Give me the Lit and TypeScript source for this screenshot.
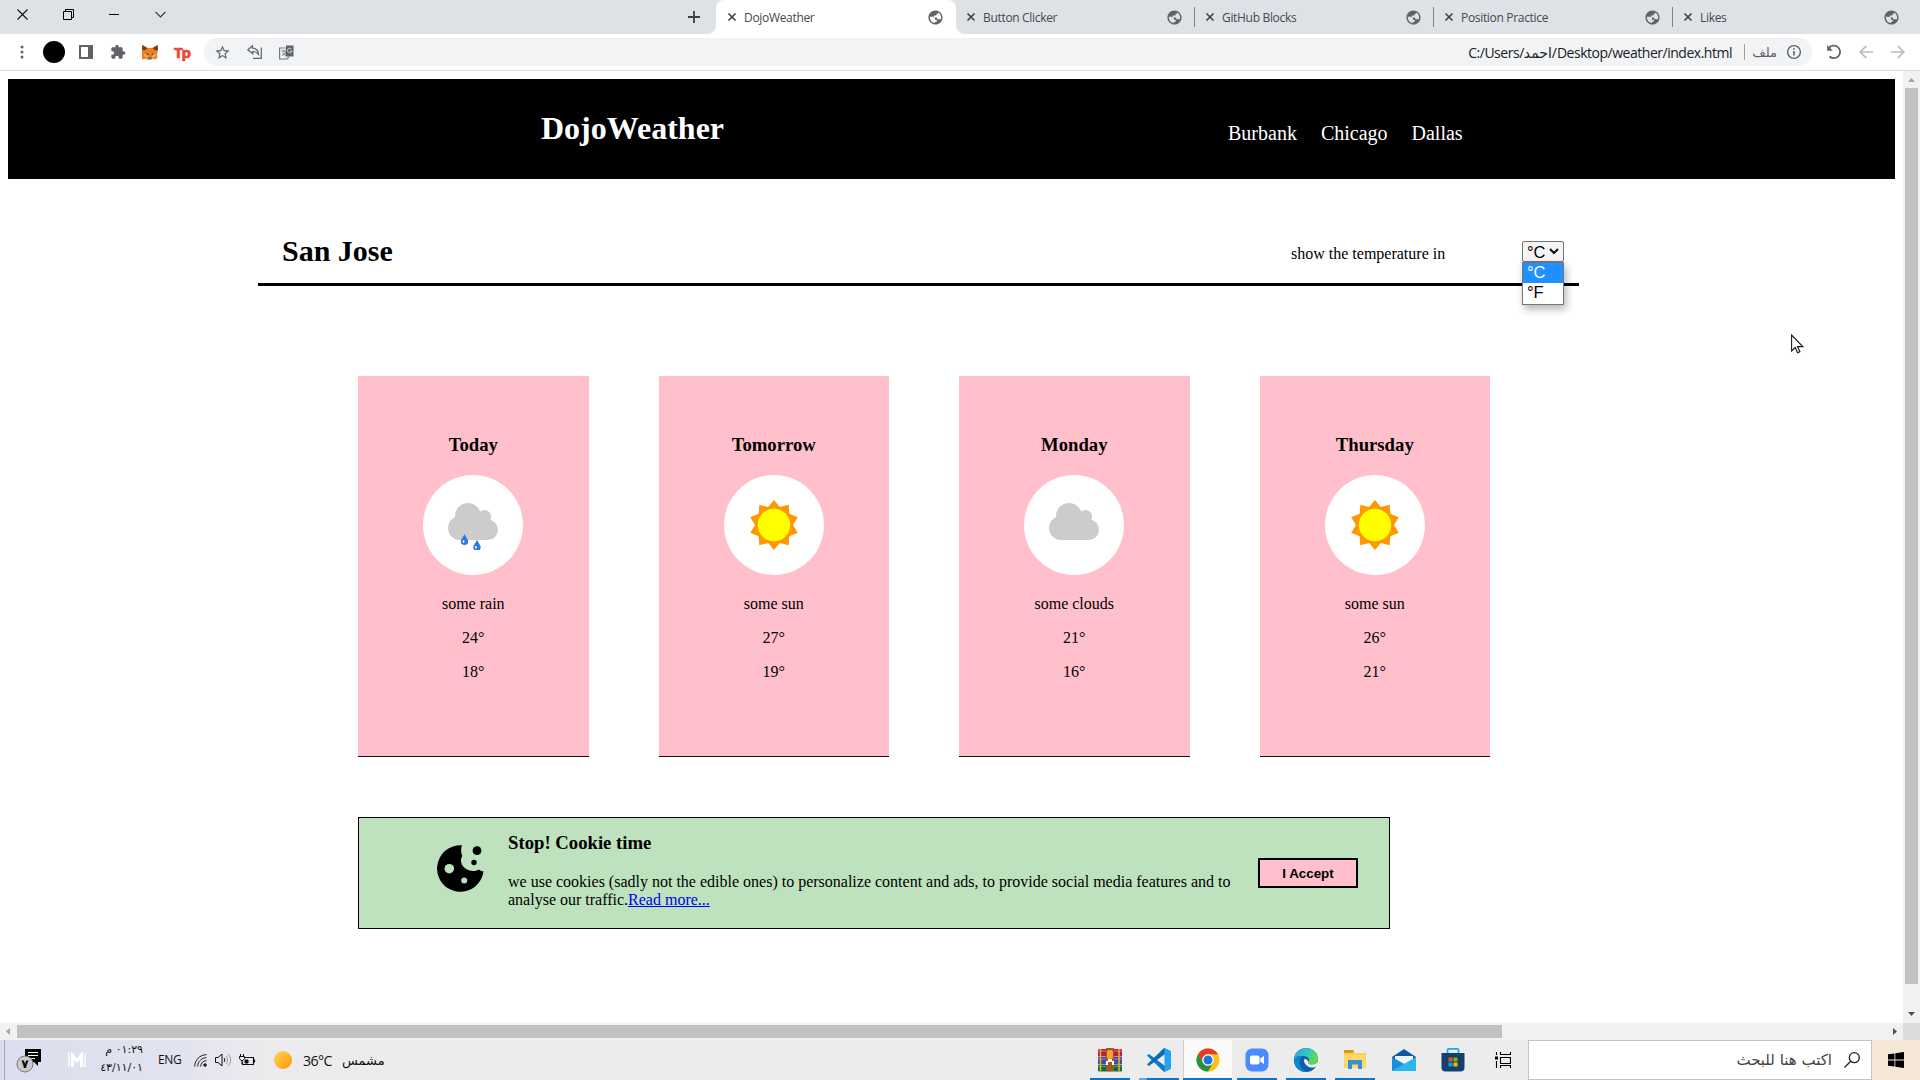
import { LitElement, html, svg, css } from "lit";
import { customElement, property } from "lit/decorators.js";

const GLOBE =
  "M12 2C6.48 2 2 6.48 2 12s4.48 10 10 10 10-4.48 10-10S17.52 2 12 2zm-1.2 17.9c-3.8-.6-6.8-3.8-6.8-7.9 0-.3 0-.6.1-.9H8.500c1.800 0 3 1.200 3 2.700v1.700h2.600v2.200c-1.600 0-3.300.8-3.300 2.200zM14.600 14.300c0-1.700-1-2.300-2.600-2.300H9.600V9.300h2.600c.9 0 1.400-.6 1.400-1.400V6.700h2V4.900c2.600 1.300 4.400 4 4.400 7.100 0 .9-.2 1.700-.4 2.500h-2c-1.200 0-1.700-.2-3-.2z";
const STAR =
  "M22 9.24l-7.19-.62L12 2 9.19 8.63 2 9.24l5.46 4.73L5.82 21 12 17.27 18.18 21l-1.63-7.03L22 9.24zM12 15.4l-3.76 2.27 1-4.28-3.32-2.88 4.38-.38L12 6.1l1.71 4.04 4.38.38-3.32 2.88 1 4.28L12 15.4z";
const PUZZLE =
  "M20.5 11H19V7c0-1.1-.9-2-2-2h-4V3.5C13 2.12 11.88 1 10.5 1S8 2.12 8 3.5V5H4c-1.1 0-1.99.9-1.99 2v3.8H3.5c1.49 0 2.7 1.21 2.7 2.7s-1.21 2.7-2.7 2.7H2V20c0 1.1.9 2 2 2h3.8v-1.5c0-1.49 1.21-2.7 2.7-2.7 1.49 0 2.7 1.21 2.7 2.7V22H17c1.1 0 2-.9 2-2v-4h1.5c1.38 0 2.5-1.12 2.5-2.5S21.88 11 20.5 11z";

const CLOUD = svg`<g fill="#ccc"><circle cx="20" cy="16" r="13"/><circle cx="36.500" cy="16.700" r="6.700"/><circle cx="12" cy="28" r="12"/><circle cx="39.700" cy="29.700" r="10.300"/><rect x="12" y="18" width="28" height="22"/></g>`;
const drop = (x: number, y: number) =>
  svg`<g transform="translate(${x} ${y})"><path d="M0 0C1 3 3.700 5 3.700 7.500a3.700 3.500 0 0 1-7.400 0C-3.700 5-1 3 0 0z" fill="#2a7ae2"/><ellipse cx="-1" cy="7.600" rx=".9" ry="1.300" fill="#fff"/></g>`;
const SUN_POINTS = Array.from({ length: 20 }, (_, i) => {
  const r = i % 2 ? 19 : 25;
  const a = (i * Math.PI) / 10 - Math.PI / 2;
  return `${(25 + r * Math.cos(a)).toFixed(2)},${(25 + r * Math.sin(a)).toFixed(2)}`;
}).join(" ");

const WEATHER: Record<string, unknown> = {
  rain: html`<svg width="50" height="50" viewBox="0 0 50 50">${CLOUD}${drop(16.500, 34)}${drop(29, 39.700)}</svg>`,
  sun: html`<svg width="50" height="50" viewBox="0 0 50 50"><polygon points=${SUN_POINTS} fill="#ff9800"/><circle cx="25" cy="25" r="16.200" fill="#ff0"/></svg>`,
  clouds: html`<svg width="50" height="50" viewBox="0 0 50 50">${CLOUD}</svg>`,
};

@customElement("browser-tab")
class BrowserTab extends LitElement {
  @property() label = "";
  @property({ type: Boolean, reflect: true }) active = false;
  @property({ type: Boolean, reflect: true }) divided = false;
  static styles = css`
    :host { display: flex; flex: none; box-sizing: border-box; width: 239px; height: 34px; align-items: center; padding: 0 12px 0 10px; position: relative; font: 12px "Open Sans", "Noto Sans", sans-serif; color: #45494d; }
    :host([active]) { background: #fff; border-radius: 8px 8px 0 0; width: 240px; padding-left: 11px; }
    :host([active])::before, :host([active])::after { content: ""; position: absolute; bottom: 0; width: 8px; height: 8px; }
    :host([active])::before { left: -8px; background: radial-gradient(circle at 0 0, transparent 7.5px, #fff 8px); }
    :host([active])::after { right: -8px; background: radial-gradient(circle at 100% 0, transparent 7.5px, #fff 8px); }
    :host([divided])::after { content: ""; position: absolute; right: 0; top: 7px; width: 1px; height: 20px; background: #808387; }
    .title { flex: 1; margin-left: 7px; font-size: 12px; letter-spacing: -0.32px; white-space: nowrap; }
    svg { display: block; }
  `;
  render() {
    return html`<svg width="10" height="10" viewBox="0 0 10 10"><path d="M1.500 1.500l7 7M8.500 1.500l-7 7" stroke="#3c4043" stroke-width="1.600"/></svg>
      <span class="title">${this.label}</span>
      <svg width="17" height="17" viewBox="0 0 24 24"><path d=${GLOBE} fill="#5f6368"/></svg>`;
  }
}

@customElement("browser-chrome")
class BrowserChrome extends LitElement {
  static styles = css`
    :host { display: block; height: 71px; font-family: "Open Sans", "Noto Sans", "DejaVu Sans", sans-serif; }
    svg { display: block; }
    .strip { display: flex; height: 34px; background: #dee1e6; }
    .controls { display: flex; margin-left: -1px; }
    .controls span { width: 46px; height: 28px; display: grid; place-items: center; }
    .tabs { display: flex; margin-left: auto; width: 1248px; }
    .plus { width: 44px; height: 34px; flex: none; display: grid; place-items: center; }
    .bar { display: flex; height: 36px; align-items: center; background: #fff; border-bottom: 1px solid #d9dadc; padding: 0 6px; }
    .cell { width: 32px; height: 28px; display: grid; place-items: center; }
    .avatar { width: 22px; height: 22px; border-radius: 50%; background: #000; }
    .tp { font: bold 15px "Open Sans", sans-serif; color: #f04438; letter-spacing: -1px; -webkit-text-stroke: 0.7px #f04438; line-height: 16px; }
    .omni { flex: 1; display: flex; align-items: center; height: 28px; border-radius: 14px; background: #f1f3f4; margin: 0 6px; padding: 0 10px 0 2px; }
    .url { margin-left: auto; font-size: 14px; letter-spacing: -0.48px; color: #202124; white-space: nowrap; }
    .sep { width: 1px; height: 16px; background: #9aa0a6; margin: 0 7px 0 12px; }
    .file { font-size: 13px; color: #5f6368; width: 25px; margin-right: 9px; white-space: nowrap; }
  `;
  render() {
    return html`
      <div class="strip">
        <div class="controls">
          <span><svg width="11" height="11" viewBox="0 0 11 11"><path d="M.5.5l10 10M10.500.5l-10 10" stroke="#111" stroke-width="1.100"/></svg></span>
          <span><svg width="11" height="11" viewBox="0 0 11 11"><path d="M.5 2.500h8v8h-8zM2.500 2.500v-2h8v8h-2" fill="none" stroke="#000"/></svg></span>
          <span><svg width="10" height="11" viewBox="0 0 10 11"><path d="M0 5.500h10" stroke="#000"/></svg></span>
          <span><svg width="11" height="7" viewBox="0 0 11 7"><path d="M.5.8l5 5 5-5" fill="none" stroke="#333" stroke-width="1.200"/></svg></span>
        </div>
        <div class="tabs">
          <span class="plus"><svg width="12" height="12" viewBox="0 0 12 12"><path d="M6 0v12M0 6h12" stroke="#3c4043" stroke-width="1.800"/></svg></span>
          <browser-tab active label="DojoWeather"></browser-tab>
          <browser-tab divided label="Button Clicker"></browser-tab>
          <browser-tab divided label="GitHub Blocks"></browser-tab>
          <browser-tab divided label="Position Practice"></browser-tab>
          <browser-tab label="Likes"></browser-tab>
        </div>
      </div>
      <div class="bar">
        <span class="cell"><svg width="4" height="14" viewBox="0 0 4 14" fill="#5f6368"><circle cx="2" cy="2" r="1.500"/><circle cx="2" cy="7" r="1.500"/><circle cx="2" cy="12" r="1.500"/></svg></span>
        <span class="cell"><i class="avatar"></i></span>
        <span class="cell"><svg width="14" height="14" viewBox="0 0 14 14"><path fill-rule="evenodd" d="M0 0h14v14H0zM2 2v10h7V2z" fill="#5f6368"/></svg></span>
        <span class="cell"><svg width="16" height="16" viewBox="0 0 24 24"><path d=${PUZZLE} fill="#5f6368"/></svg></span>
        <span class="cell"><svg width="16" height="15" viewBox="0 0 32 30"><path d="M1 0l11 6h8l11-6 1 9-2 9 1 7-4 4-7-2-3 3h-6l-3-3-7 2-4-4 1-7-2-9z" fill="#e8821e"/><path d="M1 0l10 7-7 4-4-1zM31 0L21 7l7 4 4-1z" fill="#763d16"/><path d="M3 18h8l2 8-8-2zM29 18h-8l-2 8 8-2z" fill="#f5a04c"/><path d="M9 16l5 3-4 1zM23 16l-5 3 4 1z" fill="#243447"/><path d="M12 25h8l1 3-2 2h-6l-2-2z" fill="#c0ad9e"/><path d="M13 25h6v2h-6z" fill="#161616"/></svg></span>
        <span class="cell"><span class="tp">Tp</span></span>
        <div class="omni">
          <span class="cell"><svg width="17" height="17" viewBox="0 0 24 24"><path d=${STAR} fill="#5f6368"/></svg></span>
          <span class="cell"><svg width="15" height="14" viewBox="0 0 15 14" fill="none" stroke="#5f6368" stroke-width="1.200"><path d="M5.500.8L.8 4.800l5 4V6.500c2.500-.2 4.200.8 5.700 2.800C11.200 5.500 9 3.300 5.500 3.200zM14.300 2.500v10.800H6"/></svg></span>
          <span class="cell"><svg width="15" height="15" viewBox="0 0 15 15"><path d="M6 3H.6v11H8l2-2" fill="none" stroke="#74787c" stroke-width="1.200"/><path d="M7 .5h7.500V11.500H6.500V8z" fill="#5f6368"/><path d="M2.500 6h4M4.500 5v1M3 10.500C5 9.500 6 8 6 6.500M3.500 8l3 2.500" fill="none" stroke="#74787c"/><path d="M12.700 4.200a2.300 2.300 0 1 0 .3 1.800h-2" fill="none" stroke="#d5d7d9"/></svg></span>
          <span class="url">C:/Users/احمد/Desktop/weather/index.html</span>
          <i class="sep"></i>
          <span class="file" dir="rtl">ملف</span>
          <svg width="16" height="16" viewBox="0 0 16 16"><circle cx="8" cy="8" r="6.400" fill="none" stroke="#5f6368" stroke-width="1.400"/><path d="M8 7v4.500M8 4.300v1.500" stroke="#5f6368" stroke-width="1.600"/></svg>
        </div>
        <span class="cell"><svg width="16" height="16" viewBox="0 0 16 16"><path d="M2.600 4.400A6.300 6.300 0 1 1 3.500 12.500" fill="none" stroke="#5f6368" stroke-width="1.800"/><path d="M1.200 1v5.700h5.700z" fill="#5f6368"/></svg></span>
        <span class="cell"><svg width="14" height="14" viewBox="0 0 14 14" fill="none" stroke="#babcbe" stroke-width="1.700"><path d="M14 7H1.500M7.300.8L1.200 7l6.100 6.200"/></svg></span>
        <span class="cell"><svg width="14" height="14" viewBox="0 0 14 14" fill="none" stroke="#babcbe" stroke-width="1.700"><path d="M0 7h12.500M6.700.8L12.800 7l-6.100 6.200"/></svg></span>
      </div>`;
  }
}

@customElement("forecast-card")
class ForecastCard extends LitElement {
  @property() day = "";
  @property() icon = "sun";
  @property() text = "";
  @property() high = "";
  @property() low = "";
  static styles = css`
    :host { display: flex; flex-direction: column; align-items: center; box-sizing: border-box; height: 381px; padding-top: 58px; background: #ffc0cb; border-bottom: 1px solid #111; }
    h3 { margin: 0 0 20px; font-size: 18.72px; line-height: 21px; }
    .disc { width: 100px; height: 100px; border-radius: 50%; background: #fff; display: grid; place-items: center; margin-bottom: 20px; }
    p { margin: 0 0 16px; font-size: 16px; line-height: 18px; }
    svg { display: block; }
  `;
  render() {
    return html`<h3>${this.day}</h3><div class="disc">${WEATHER[this.icon]}</div><p>${this.text}</p><p>${this.high}°</p><p>${this.low}°</p>`;
  }
}

@customElement("weather-page")
class WeatherPage extends LitElement {
  static styles = css`
    :host { display: block; box-sizing: border-box; padding: 8px 8px 0; background: #fff; color: #000; font: 16px/18px "Liberation Serif", "Times New Roman", serif; overflow: hidden; }
    header { display: flex; height: 100px; background: #000; color: #fff; padding-left: 533px; }
    h1 { margin: 31px 0 0; font-size: 32px; line-height: 37px; width: 687px; }
    nav { display: flex; gap: 24px; font-size: 20px; line-height: 23px; padding-top: 43px; }
    .city { display: flex; width: 1297px; margin: 46px 0 0 250px; padding-left: 24px; height: 58px; border-bottom: 3px solid #000; position: relative; }
    h2 { margin: 9px 0 0; font-size: 30px; line-height: 34px; width: 1009px; }
    .city p { margin: 20px 0 0; width: 231px; }
    .select { position: relative; box-sizing: border-box; width: 42px; height: 21px; margin-top: 16px; border: 1px solid #767676; border-radius: 2px; background: #f5f5f5; font: 16.5px/18px "Liberation Sans", Arial, sans-serif; padding: 0 4px; display: flex; align-items: center; justify-content: space-between; }
    .select svg { display: block; }
    .options { position: absolute; left: -1px; top: 20px; width: 40px; height: 41px; border: 1px solid #767676; background: #fff; box-shadow: 2px 4px 8px rgba(0, 0, 0, 0.3); z-index: 1; }
    .options div { height: 20px; padding-left: 4px; line-height: 18px; }
    .options .on { background: #1e90ff; color: #fff; }
    .cards { display: grid; grid-template-columns: repeat(4, 1fr); gap: 70px; width: 1132px; margin: 90px 0 0 350px; }
    .cookie { display: flex; box-sizing: border-box; width: 1032px; height: 112px; margin: 60px 0 0 350px; background: #bee2be; border: 1px solid #000; padding-left: 78px; }
    .cookie > svg { display: block; margin-top: 27px; flex: none; }
    .copy { width: 730px; margin-left: 24px; flex: none; }
    h3 { margin: 14px 0 20px; font-size: 18.72px; line-height: 21px; }
    .copy p { margin: 0; }
    a { color: #0000ee; text-decoration: underline; }
    button { box-sizing: border-box; width: 100px; height: 30px; margin: 40px 0 0 20px; padding: 0; border: 2px solid #000; background: #ffc0cb; color: #000; font: bold 13.33px "Liberation Sans", Arial, sans-serif; }
  `;
  render() {
    return html`
      <header><h1>DojoWeather</h1><nav><span>Burbank</span><span>Chicago</span><span>Dallas</span></nav></header>
      <section class="city">
        <h2>San Jose</h2>
        <p>show the temperature in</p>
        <div class="select"><span>°C</span><svg width="10" height="7" viewBox="0 0 10 7"><path d="M1 1l4 4 4-4" fill="none" stroke="#111" stroke-width="2"/></svg>
          <div class="options"><div class="on">°C</div><div>°F</div></div>
        </div>
      </section>
      <section class="cards">
        <forecast-card day="Today" icon="rain" text="some rain" high="24" low="18"></forecast-card>
        <forecast-card day="Tomorrow" icon="sun" text="some sun" high="27" low="19"></forecast-card>
        <forecast-card day="Monday" icon="clouds" text="some clouds" high="21" low="16"></forecast-card>
        <forecast-card day="Thursday" icon="sun" text="some sun" high="26" low="21"></forecast-card>
      </section>
      <section class="cookie">
        <svg width="47" height="47" viewBox="0 0 47 47"><path d="M25 .3A23.300 23.300 0 1 0 46.500 26.200c-1.500.3-3-.2-4.500-1.700-7 4-18-.5-18-9 0-2 .5-3 1.300-4.500C24 8 23.600 3.500 25 .3z"/><circle cx="40" cy="5.700" r="4.400"/><circle cx="37" cy="17.500" r="2.700"/><circle cx="12.300" cy="23.700" r="4.800" fill="#bee2be"/><circle cx="27.200" cy="35.500" r="3" fill="#bee2be"/></svg>
        <div class="copy"><h3>Stop! Cookie time</h3><p>we use cookies (sadly not the edible ones) to personalize content and ads, to provide social media features and to analyse our traffic.<a>Read more...</a></p></div>
        <button>I Accept</button>
      </section>`;
  }
}

const APPS = [
  { cls: "run", art: html`<svg width="24" height="24" viewBox="0 0 24 24"><rect y="1" width="24" height="7.500" rx="1" fill="#b3213f"/><rect y="9" width="24" height="7" fill="#4a4aa0"/><rect y="16.500" width="24" height="7" rx="1" fill="#0f6b45"/><path d="M0 3h24" stroke="#e46a7c"/><path d="M0 11h24" stroke="#8080c8"/><path d="M0 18.500h24" stroke="#3fa06d"/><path d="M2.500 1v22.500M21 1v22.500" stroke="#e3b52a" stroke-width="1.500"/><rect x="8" y="0" width="8" height="23" fill="#a4561f"/><rect x="9" y="2" width="6" height="9" rx="2" fill="#f1a233"/><path d="M8 13h2v4H8zM14 13h2v4h-2zM10 11h4v3h-4z" fill="#fff"/></svg>` },
  { cls: "run split", art: html`<svg width="24" height="24" viewBox="0 0 24 24"><path d="M0 7.500L2 6l16 12v6l-1.500-.5z" fill="#0f7ac5"/><path d="M0 16.500L2 18 18 6V0l-1.500.5z" fill="#0a6cb5"/><path d="M17.500 0L24 3v18l-6.500 3z" fill="#24a4f0"/></svg>` },
  { cls: "run current", art: html`<svg width="24" height="24" viewBox="0 0 48 48"><circle cx="24" cy="24" r="23" fill="#fbc116"/><path d="M4.080 12.500A23 23 0 0 1 43.920 12.500H24a11.500 11.500 0 0 0-9.960 17.250z" fill="#e33b2e"/><path d="M4.080 12.500A23 23 0 0 0 24 47l9.960-17.250A11.500 11.500 0 0 1 14.040 29.750z" fill="#229342"/><circle cx="24" cy="24" r="11.500" fill="#fff"/><circle cx="24" cy="24" r="9" fill="#1a73e8"/></svg>` },
  { cls: "run", art: html`<svg width="24" height="24" viewBox="0 0 24 24"><rect x=".5" y=".5" width="23" height="23" rx="6.500" fill="#4a8cff"/><rect x="5" y="7.500" width="9.500" height="9" rx="2" fill="#fff"/><path d="M15.300 10.500L19 8v8l-3.700-2.500z" fill="#fff"/></svg>` },
  { cls: "run", art: html`<svg width="24" height="24" viewBox="0 0 24 24"><defs><linearGradient id="eg" x1="0" y1="0" x2="1" y2=".4"><stop offset="0" stop-color="#2aa5e0"/><stop offset=".55" stop-color="#35c1c8"/><stop offset="1" stop-color="#5fdc50"/></linearGradient></defs><circle cx="12" cy="12" r="12" fill="#0d5fa8"/><path d="M0 12C0 5 5 0 12 0c7 0 12 5 12 10.500 0 4-3 6-6 6-3.500 0-4.500-1.200-3.500-2.500 2-3-1-6-5.500-6C4 8 1 10 0 12z" fill="url(#eg)"/><path d="M0 12c1-3.500 5-4.800 8-3.500-2 1.500-3 4.500-2 8 1 4 4 6.500 7 7.500C5.500 24.500 0 19 0 12z" fill="#1283d6"/><path d="M24 13v6l-1.500-.5c-2 1.200-6 1.500-8 .2-3-1.500-5-4.500-4.500-7.200 1.500-1.500 4 .5 4.500 2.500-1 1.500 0 2.500 3.500 2.500 3 0 5.200-1.200 6-3.500z" fill="#ededed"/></svg>` },
  { cls: "run", art: html`<svg width="22" height="20" viewBox="0 0 22 20"><path d="M0 1h9l1.500 2H22v15H0z" fill="#fbcf55"/><path d="M0 0h9.500v3H0z" fill="#d99a0b"/><path d="M0 5h22v13H0z" fill="#ffd868"/><path d="M4 10h14v9h-4v-4.500H8V19H4z" fill="#3c8ed6"/></svg>` },
  { cls: "", art: html`<svg width="24" height="24" viewBox="0 0 24 24"><path d="M0 9L12 1l12 8v5H0z" fill="#0b59a3"/><path d="M3 8h18v8H3z" fill="#f4f4f4"/><path d="M0 9l14 8-14 6z" fill="#1b8ede"/><path d="M24 9v14H0z" fill="#2bb5ef"/></svg>` },
  { cls: "", art: html`<svg width="24" height="24" viewBox="0 0 24 24"><path d="M6.500 6V2.200C6.500 1 7 .8 8 .8h8c1 0 1.500.3 1.500 1.400V6" fill="none" stroke="#28a8ea" stroke-width="1.800"/><path d="M.5 5h23v14.500a4 4 0 0 1-4 4h-15a4 4 0 0 1-4-4z" fill="#173f6e"/><path d="M7.500 9.500h4v4h-4z" fill="#f25022"/><path d="M12.500 9.500h4v4h-4z" fill="#7fba00"/><path d="M7.500 14.500h4v4h-4z" fill="#00a4ef"/><path d="M12.500 14.500h4v4h-4z" fill="#ffb900"/></svg>` },
  { cls: "view", art: html`<svg width="16" height="16" viewBox="0 0 16 16" fill="none" stroke="#000" stroke-width="1.100"><path d="M5.500 5.500h10v6h-10zM5.500 0v2.500h10V0M5.500 16v-2.500h10V16M1.500 0v3M1.500 9v7"/><path d="M0 4.500h3v3H0z" fill="#000" stroke="none"/></svg>` },
];

@customElement("task-bar")
class TaskBar extends LitElement {
  static styles = css`
    :host { display: flex; height: 40px; align-items: stretch; color: #111; font-family: "Open Sans", "Noto Sans", "DejaVu Sans", sans-serif; background: linear-gradient(90deg, #dcdeed 0, #e2e3f0 180px, #ebebee 260px, #ececec 400px, #ececec 1500px, #f5e8d6 1870px); }
    svg { display: block; }
    .tray { display: flex; align-items: center; margin-left: 4px; border-left: 1px solid #a9abb8; }
    .note { margin-left: 11px; }
    .brand { margin-left: 26px; }
    .clock { width: 50px; margin-left: 7px; font: 11px/18px "DejaVu Sans", sans-serif; white-space: nowrap; letter-spacing: -0.7px; padding-bottom: 2px; }
    .date { letter-spacing: -1.2px; }
    .lang { width: 36px; margin-left: 15px; font-size: 12px; letter-spacing: -0.4px; padding-bottom: 2px; }
    .sound { margin-left: 8px; }
    .battery { margin-left: 7px; }
    .orb { width: 18px; height: 18px; border-radius: 50%; margin: 0 11px 0 18px; background: linear-gradient(135deg, #ffd75a, #ff9400); }
    .temp { width: 39px; font-size: 14.2px; letter-spacing: -0.6px; }
    .sky { font: 13px "DejaVu Sans", sans-serif; }
    .apps { display: flex; margin-left: auto; }
    .app { box-sizing: border-box; width: 49px; height: 40px; display: grid; place-items: center; position: relative; }
    .run::after { content: ""; position: absolute; left: 5px; right: 4px; bottom: 0; height: 2px; background: #0078d7; }
    .split::after { background: linear-gradient(90deg, #5fa8e6 8px, #0078d7 8px); }
    .current { background: #fafafa; border-left: 1px solid #d0d0d0; }
    .current::after { left: -1px; right: 0; }
    .view { width: 51px; }
    .search { box-sizing: border-box; width: 344px; border: 1px solid #c4c4c4; background: #fff; display: flex; align-items: center; justify-content: flex-end; gap: 12px; padding-right: 11px; font: 15px "DejaVu Sans", sans-serif; color: #444; }
    .start { width: 48px; display: grid; place-items: center; background: #f5e8d6; }
  `;
  render() {
    return html`
      <div class="tray">
        <svg class="note" width="26" height="26" viewBox="0 0 26 26"><path d="M9 2h16v13h-3v4l-4-4H9z" fill="#000"/><path d="M12 5.500h10M12 8.500h10M12 11.500h7" stroke="#fff"/><circle cx="9" cy="17" r="8" fill="#c9cad0" stroke="#777"/><text x="9" y="21" text-anchor="middle" font-size="12" font-weight="bold" font-family="DejaVu Sans">٧</text></svg>
        <svg class="brand" width="18" height="16" viewBox="0 0 18 16" fill="none" stroke="#fff"><path d="M1 1v14M17 1v14" stroke-width="1.400"/><path d="M4.500 15V3L9 9l4.500-6v12" stroke-width="3"/></svg>
        <div class="clock" dir="rtl"><div>٠١:٢٩ م</div><div class="date">٤٣/١١/٠١</div></div>
        <span class="lang">ENG</span>
        <svg width="13" height="13" viewBox="0 0 13 13" fill="none" stroke="#222"><path d="M.7 12.500C.7 6 6 .7 12.500.7M3.700 12.500c0-5 4-8.800 8.800-8.800M6.700 12.500c0-3.500 2.500-5.800 5.800-5.800"/><circle cx="11" cy="11" r="1.300" fill="#222"/></svg>
        <svg class="sound" width="17" height="14" viewBox="0 0 17 14" fill="none" stroke="#111"><path d="M.5 4.500h2.500l4-3.500v12l-4-3.500H.5z"/><path d="M9 5c1 1 1 3 0 4"/><path d="M11 3c2 2 2 6 0 8M13 1c3.500 3 3.500 9 0 12" stroke="#999"/></svg>
        <svg class="battery" width="17" height="13" viewBox="0 0 17 13" fill="none" stroke="#111"><path d="M6 3.500h8.500v7H3.500V8M15.500 5.500v3" stroke-width="1.200"/><path d="M1.500 0v2M4.500 0v2M.5 2.500h5v2l-1.500 2H2l-1.500-2zM3 6v4"/><path d="M6 6h3v3H6z" fill="#111"/></svg>
        <i class="orb"></i><span class="temp">36°C</span><span class="sky">مشمس</span>
      </div>
      <div class="apps">${APPS.map((a) => html`<span class="app ${a.cls}">${a.art}</span>`)}</div>
      <div class="search"><span dir="rtl">اكتب هنا للبحث</span><svg width="16" height="16" viewBox="0 0 16 16" fill="none" stroke="#222" stroke-width="1.300"><circle cx="10.300" cy="5.700" r="5"/><path d="M6.700 9.300L.5 15.500"/></svg></div>
      <div class="start"><svg width="16" height="16" viewBox="0 0 16 16"><path d="M0 2.300L6.500 1.400v6.200H0zM7.300 1.300L16 0v7.600H7.300zM0 8.400h6.500v6.200L0 13.700zM7.300 8.400H16V16l-8.700-1.300z"/></svg></div>`;
  }
}

@customElement("app-root")
class AppRoot extends LitElement {
  static styles = css`
    :host { display: flex; flex-direction: column; width: 1920px; height: 1080px; overflow: hidden; position: relative; background: #fff; }
    svg { display: block; }
    .view { flex: 1; display: grid; grid-template-columns: 1903px 17px; grid-template-rows: 952px 17px; }
    .bar { display: flex; align-items: center; justify-content: space-between; background: #f1f1f1; }
    .v { flex-direction: column; padding: 7px 0; box-sizing: border-box; }
    .h { padding: 0 6px; }
    .v i { width: 13px; height: 896px; background: #c1c1c1; margin: 6px 0 auto; }
    .h i { height: 13px; width: 1485px; background: #c1c1c1; margin: 0 auto 0 7px; }
    .corner { background: #dcdcdc; }
    .pointer { position: absolute; left: 1791px; top: 334px; }
  `;
  render() {
    return html`
      <browser-chrome></browser-chrome>
      <div class="view">
        <weather-page></weather-page>
        <div class="bar v"><svg width="7" height="4"><path d="M0 4L3.500 0 7 4z" fill="#a3a3a3"/></svg><i></i><svg width="7" height="4"><path d="M0 0l3.500 4L7 0z" fill="#505050"/></svg></div>
        <div class="bar h"><svg width="4" height="7"><path d="M4 0L0 3.500 4 7z" fill="#a3a3a3"/></svg><i></i><svg width="4" height="7"><path d="M0 0l4 3.500L0 7z" fill="#505050"/></svg></div>
        <div class="corner"></div>
      </div>
      <task-bar></task-bar>
      <svg class="pointer" width="13" height="20" viewBox="0 0 13 20"><path d="M.6 1v16l3.700-3.500 2.300 5.200 2.300-1-2.300-5.100h5.200z" fill="#fff" stroke="#15151f" stroke-width="1.100"/></svg>`;
  }
}
